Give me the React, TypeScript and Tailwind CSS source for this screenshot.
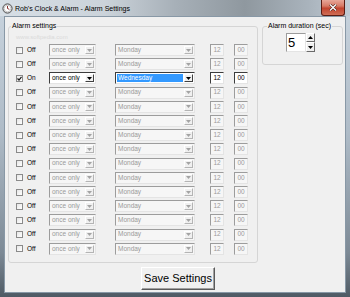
import React from "react";

type RowData = { on: boolean; day: string };

const rows: RowData[] = Array.from({ length: 15 }, (_, i) =>
  i === 2 ? { on: true, day: "Wednesday" } : { on: false, day: "Monday" }
);

function Arrow({ enabled }: { enabled: boolean }) {
  return (
    <svg width="5" height="3" viewBox="0 0 5 3" className="block">
      <polygon points="0,0 5,0 2.5,3" fill={enabled ? "#000000" : "#a3a3a3"} />
    </svg>
  );
}

function DropBtn({ enabled }: { enabled: boolean }) {
  return (
    <div
      className={
        enabled
          ? "w-[9px] my-[1px] mr-[1px] bg-[#f0f0f0] border border-t-white border-l-white border-r-[#404040] border-b-[#404040] flex items-center justify-center"
          : "w-[9px] my-[1px] mr-[1px] bg-[#f0f0f0] border border-t-white border-l-white border-r-[#b4b4b4] border-b-[#b4b4b4] flex items-center justify-center"
      }
    >
      <Arrow enabled={enabled} />
    </div>
  );
}

function Combo({
  width,
  text,
  enabled,
  selected,
}: {
  width: string;
  text: string;
  enabled: boolean;
  selected?: boolean;
}) {
  const frame = enabled
    ? "border border-t-[#3c3c3c] border-l-[#3c3c3c] border-r-[#e4e4e4] border-b-[#e4e4e4] bg-white"
    : "border border-t-[#9c9c9c] border-l-[#9c9c9c] border-r-[#e4e4e4] border-b-[#e4e4e4] bg-[#f6f6f6]";
  return (
    <div className={`${width} h-[12px] flex items-stretch ${frame}`}>
      <div className="flex-1 min-w-0 flex items-stretch">
        {selected ? (
          <div className="flex-1 my-[1px] ml-[1px] mr-[1px] bg-[#3399ff] flex items-center pl-[1px]">
            <span className="text-[6.5px] leading-none text-white">{text}</span>
          </div>
        ) : (
          <div className="flex-1 flex items-center pl-[2px]">
            <span
              className={
                enabled
                  ? "text-[6.5px] leading-none text-black"
                  : "text-[6.5px] leading-none text-[#9a9a9a]"
              }
            >
              {text}
            </span>
          </div>
        )}
      </div>
      <DropBtn enabled={enabled} />
    </div>
  );
}

function Edit({ text, enabled }: { text: string; enabled: boolean }) {
  return (
    <div
      className={
        enabled
          ? "w-[14px] h-[12px] border border-t-[#3c3c3c] border-l-[#3c3c3c] border-r-[#e4e4e4] border-b-[#e4e4e4] bg-white flex items-center justify-center"
          : "w-[14px] h-[12px] border border-t-[#9c9c9c] border-l-[#9c9c9c] border-r-[#e4e4e4] border-b-[#e4e4e4] bg-[#f6f6f6] flex items-center justify-center"
      }
    >
      <span
        className={
          enabled
            ? "text-[6.5px] leading-none text-black"
            : "text-[6.5px] leading-none text-[#9a9a9a]"
        }
      >
        {text}
      </span>
    </div>
  );
}

function CheckBox({ checked }: { checked: boolean }) {
  return (
    <div className="w-[7px] h-[7px] border border-[#8a8a8a] bg-[linear-gradient(135deg,#e6e6e6,#ffffff)] flex items-center justify-center">
      {checked && (
        <svg width="5" height="5" viewBox="0 0 5 5" className="block">
          <polyline points="0.5,2.5 2,4 4.5,0.8" fill="none" stroke="#1a1a1a" strokeWidth="1.2" />
        </svg>
      )}
    </div>
  );
}

function AlarmRow({ row }: { row: RowData }) {
  return (
    <div className="h-[12px] flex items-center">
      <CheckBox checked={row.on} />
      <div className="ml-[4px] w-[22px] text-[6.5px] leading-none text-black">
        {row.on ? "On" : "Off"}
      </div>
      <Combo width="w-[47px]" text="once only" enabled={row.on} />
      <div className="ml-[19px]">
        <Combo width="w-[80px]" text={row.day} enabled={row.on} selected={row.on} />
      </div>
      <div className="ml-[15px]">
        <Edit text="12" enabled={row.on} />
      </div>
      <div className="ml-[10px]">
        <Edit text="00" enabled={row.on} />
      </div>
    </div>
  );
}

function ClockIcon() {
  return (
    <svg width="11" height="11" viewBox="0 0 11 11" className="block">
      <circle cx="5.5" cy="5.5" r="4.6" fill="#e9e9e9" stroke="#4a4a4a" strokeWidth="1" />
      <circle cx="5.5" cy="5.5" r="3.3" fill="#ffffff" stroke="#9a9a9a" strokeWidth="0.5" />
      <line x1="5.5" y1="5.5" x2="5.5" y2="3" stroke="#7a1c1c" strokeWidth="0.9" />
      <line x1="5.5" y1="5.5" x2="7.3" y2="6.3" stroke="#7a1c1c" strokeWidth="0.9" />
    </svg>
  );
}

export default function App() {
  return (
    <div className="w-[350px] h-[297px] flex flex-col overflow-hidden bg-[linear-gradient(180deg,#c9d4de_0%,#aebbc7_45%,#7d8a96_85%,#4f5a64_100%)] font-['Liberation_Sans',Arial,sans-serif]">
      {/* Title bar */}
      <div className="relative h-[16px] flex items-center pl-[2px] bg-[linear-gradient(90deg,#d6dee5_0%,#cbd3da_30%,#a7b0b8_50%,#8f989f_70%,#a9b3bc_88%,#c2ccd5_100%)]">
        <ClockIcon />
        <span className="ml-[2px] text-[7px] leading-none text-black">
          Rob's Clock &amp; Alarm - Alarm Settings
        </span>
        <div className="absolute right-[5px] top-0 w-[24px] h-[16px] rounded-b-[3px] border border-t-0 border-[#5a1d14] bg-[linear-gradient(180deg,#e7a698_0%,#d77a66_40%,#c2442f_55%,#cf6d55_100%)] flex items-center justify-center">
          <svg width="8" height="7" viewBox="0 0 8 7" className="block">
            <path d="M1 0.5 L7 6.5 M7 0.5 L1 6.5" stroke="#3a1510" strokeWidth="2.4" />
            <path d="M1 0.5 L7 6.5 M7 0.5 L1 6.5" stroke="#ffffff" strokeWidth="1.4" />
          </svg>
        </div>
      </div>

      {/* Window body */}
      <div className="mx-[4px] flex-1 bg-[#f0f0f0] border border-[#8898a6] flex flex-col">
        <div className="flex items-start mt-[5px] ml-[3px]">
          {/* Alarm settings group */}
          <fieldset className="w-[250px] border border-[#d5d5d5] rounded-[3px] pb-[7px]">
            <legend className="ml-[2px] px-[1px] text-[7px] leading-[8px] text-black">
              Alarm settings
            </legend>
            <div className="h-[14px] pl-[7px] flex items-center">
              <span className="text-[6px] leading-none text-[#dadada]">www.softpedia.com</span>
            </div>
            <div className="h-[211px] pl-[7px] flex flex-col justify-between">
              {rows.map((r, i) => (
                <AlarmRow key={i} row={r} />
              ))}
            </div>
          </fieldset>

          {/* Alarm duration group */}
          <fieldset className="ml-[4px] w-[81px] border border-[#d5d5d5] rounded-[3px] pb-[12px]">
            <legend className="ml-[4px] px-[1px] text-[7px] leading-[8px] text-black">
              Alarm duration (sec)
            </legend>
            <div className="mt-[3px] ml-[23px] flex h-[19px]">
              <div className="w-[20px] h-[19px] border border-t-[#9c9c9c] border-l-[#9c9c9c] border-r-[#e4e4e4] border-b-[#e4e4e4] bg-white flex items-center pl-[1px]">
                <span className="text-[13px] leading-none text-black">5</span>
              </div>
              <div className="w-[9px] h-[19px] flex flex-col">
                <div className="h-[9px] bg-[#f0f0f0] border border-t-white border-l-white border-r-[#6a6a6a] border-b-[#6a6a6a] flex items-center justify-center">
                  <svg width="5" height="3" viewBox="0 0 5 3" className="block">
                    <polygon points="0,3 5,3 2.5,0" fill="#000000" />
                  </svg>
                </div>
                <div className="h-[10px] bg-[#f0f0f0] border border-t-white border-l-white border-r-[#6a6a6a] border-b-[#6a6a6a] flex items-center justify-center">
                  <svg width="5" height="3" viewBox="0 0 5 3" className="block">
                    <polygon points="0,0 5,0 2.5,3" fill="#000000" />
                  </svg>
                </div>
              </div>
            </div>
          </fieldset>
        </div>

        <div className="mt-[4px] ml-[136px]">
          <button className="w-[74px] h-[23px] bg-[#f0f0f0] border border-t-[#ffffff] border-l-[#ffffff] border-r-[#5a5a5a] border-b-[#5a5a5a] shadow-[inset_-1px_-1px_0_#a0a0a0] flex items-center justify-center">
            <span className="text-[11px] leading-none text-black">Save Settings</span>
          </button>
        </div>
      </div>
      <div className="h-[4px]" />
    </div>
  );
}
